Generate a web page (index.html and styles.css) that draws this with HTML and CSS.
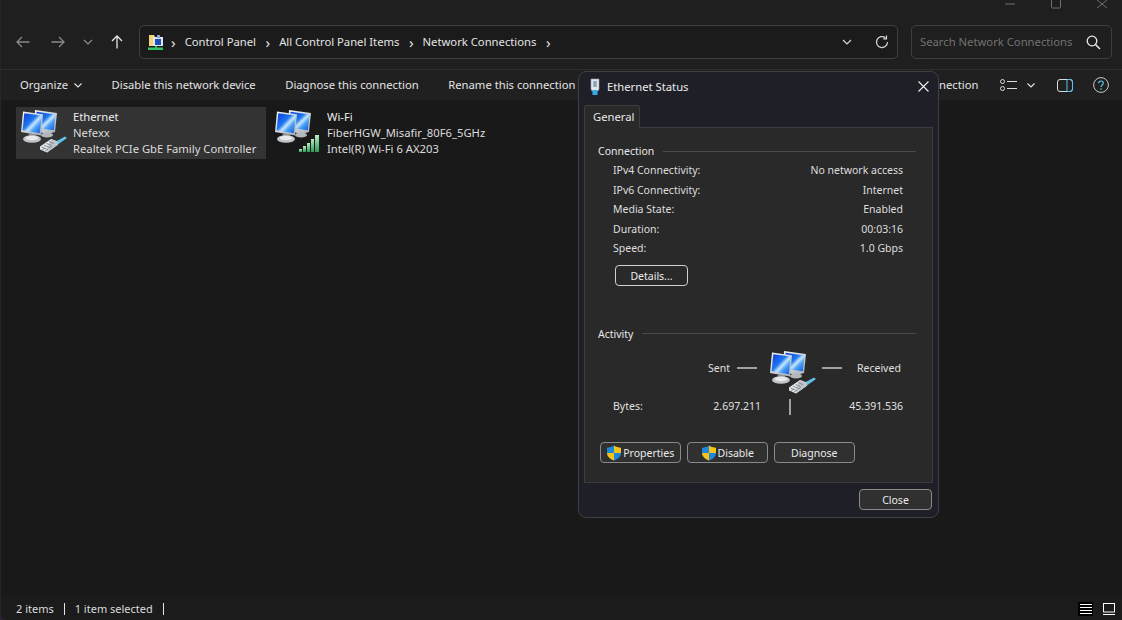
FILE: index.html
```html
<!DOCTYPE html>
<html lang="en">
<head>
<meta charset="utf-8">
<title>Network Connections</title>
<link rel="stylesheet" href="styles.css">
</head>
<body>
<svg class="defs" width="0" height="0" aria-hidden="true">
  <defs>
    <linearGradient id="scr" x1="0" y1="0" x2="1" y2="1">
      <stop offset="0" stop-color="#0a3ad8"/>
      <stop offset=".42" stop-color="#1f78f0"/>
      <stop offset=".56" stop-color="#c8e6ff"/>
      <stop offset=".7" stop-color="#4aa0f5"/>
      <stop offset="1" stop-color="#0f55dc"/>
    </linearGradient>
    <linearGradient id="bez" x1="0" y1="0" x2="1" y2="1">
      <stop offset="0" stop-color="#f6f8fa"/>
      <stop offset="1" stop-color="#a4adb5"/>
    </linearGradient>
    <linearGradient id="bar" x1="0" y1="0" x2="0" y2="1">
      <stop offset="0" stop-color="#b5ecc0"/>
      <stop offset="1" stop-color="#2f9a58"/>
    </linearGradient>
    <symbol id="pc" viewBox="0 0 48 48">
      <path d="M15 3l22 3-2 19-7 2-14-3z" fill="url(#bez)"/>
      <path d="M16.500 4.800l19 2.600-1.700 15.800-17.300-2.500z" fill="url(#scr)"/>
      <ellipse cx="27" cy="28" rx="6" ry="2.500" fill="#b4b8bc"/>
      <path d="M3 4.500l20 2.700L21 28.500 1 25z" fill="url(#bez)"/>
      <path d="M4.300 6.300l17.300 2.300-1.800 17.600-17.200-3z" fill="url(#scr)"/>
      <path d="M9 26l7 1.200 .5 3-8 0z" fill="#8f959b"/>
      <ellipse cx="12" cy="32" rx="9" ry="3.800" fill="#c0c4c8"/>
      <ellipse cx="12" cy="31" rx="6.500" ry="2.200" fill="#e8eaec"/>
    </symbol>
    <symbol id="plug" viewBox="0 0 48 48">
      <path d="M34 35.500l11-6 2 1.500-10.500 7.500z" fill="#5fc0ea"/>
      <path d="M20 39.500l11-7.500 6.500 2.500v3.500l-10.500 7.500-7-3z" fill="#e4e7ea"/>
      <path d="M31 32l6.500 2.500v3.500L27 45.500V42z" fill="#bfc5ca"/>
      <path d="M21.500 40l5 2M24 38.200l5 2M26.500 36.400l5 2M29 34.600l5 2M22 43l3-2M25 44l3-2M29 41l3-2" stroke="#70777c" stroke-width=".8" fill="none"/>
    </symbol>
    <symbol id="shield" viewBox="0 0 16 16">
      <path d="M8 .5C6 2 3.500 2.600 1 2.700V8h7z" fill="#1e88d8"/>
      <path d="M8 .5c2 1.500 4.500 2.100 7 2.200V8H8z" fill="#f6c21c"/>
      <path d="M1 8h7v7.500C4 14 1 11.500 1 8z" fill="#f6c21c"/>
      <path d="M8 8h7c0 3.500-3 6-7 7.500z" fill="#1e88d8"/>
    </symbol>
  </defs>
</svg>

<main class="window">
  <div class="titlebar">
    <svg class="cap" width="10" height="10" viewBox="0 0 10 10"><path d="M0 4h10" stroke="#6f6f6f"/></svg>
    <svg class="cap" width="10" height="10" viewBox="0 0 10 10"><rect x=".5" y="-2" width="9" height="10" rx="1" fill="none" stroke="#6f6f6f"/></svg>
    <svg class="cap" width="10" height="10" viewBox="0 0 10 10"><path d="M0 0l10 8M10 0L0 8" stroke="#6f6f6f" fill="none"/></svg>
  </div>

  <div class="navrow">
    <div class="navbtns">
      <svg class="nav-back" width="14" height="14" viewBox="0 0 14 14"><path d="M13.500 7H1M6 2L1 7l5 5" fill="none" stroke="#8a8a8a" stroke-width="1.300"/></svg>
      <svg class="nav-fwd" width="14" height="14" viewBox="0 0 14 14"><path d="M.5 7H13M8 2l5 5-5 5" fill="none" stroke="#8a8a8a" stroke-width="1.300"/></svg>
      <svg class="nav-drop" width="10" height="6" viewBox="0 0 10 6"><path d="M1 1l4 4 4-4" fill="none" stroke="#8a8a8a" stroke-width="1.200"/></svg>
      <svg class="nav-up" width="14" height="14" viewBox="0 0 14 14"><path d="M7 13.500V1M2 6l5-5 5 5" fill="none" stroke="#e6e6e6" stroke-width="1.300"/></svg>
    </div>
    <div class="address">
      <svg class="crumb-icon" width="16" height="17" viewBox="0 0 16 17">
        <path d="M1 1h5l1 2h2v9H1z" fill="#f2d675"/>
        <rect x="5" y="3" width="10" height="9" fill="#dfe6ee"/>
        <rect x="7" y="5" width="6" height="6" fill="#1d4fb4"/>
        <rect x="9" y="1" width="3" height="3" fill="#8aa8d8"/>
        <path d="M8 12v2" stroke="#2fae5a" stroke-width="2"/>
        <rect x="0" y="13.500" width="15" height="2.500" fill="#35c36a"/>
      </svg>
      <span class="sep">›</span><span class="crumb">Control Panel</span>
      <span class="sep">›</span><span class="crumb">All Control Panel Items</span>
      <span class="sep">›</span><span class="crumb">Network Connections</span>
      <span class="sep">›</span>
      <svg class="addr-drop" width="10" height="6" viewBox="0 0 10 6"><path d="M1 1l4 4 4-4" fill="none" stroke="#d6d6d6" stroke-width="1.200"/></svg>
      <svg class="addr-refresh" width="14" height="14" viewBox="0 0 14 14"><path d="M12.500 7A5.500 5.500 0 1 1 10.500 2.800" fill="none" stroke="#d6d6d6" stroke-width="1.200"/><path d="M11.500 .5v3.300H8.200" fill="none" stroke="#d6d6d6" stroke-width="1.200"/></svg>
    </div>
    <div class="search">
      <span class="search-text">Search Network Connections</span>
      <svg width="15" height="15" viewBox="0 0 15 15"><circle cx="6" cy="6" r="4.800" fill="none" stroke="#eaeaea" stroke-width="1.300"/><path d="M9.500 9.500L14 14" stroke="#eaeaea" stroke-width="1.500"/></svg>
    </div>
  </div>

  <div class="cmdbar">
    <span class="cmd organize">Organize
      <svg width="8" height="5" viewBox="0 0 8 5"><path d="M.5 .5L4 4 7.500 .5" fill="none" stroke="#e6e6e6" stroke-width="1.100"/></svg>
    </span>
    <span class="cmd">Disable this network device</span>
    <span class="cmd">Diagnose this connection</span>
    <span class="cmd">Rename this connection</span>
    <span class="cmd">View status of this connection</span>
    <span class="cmd cmd-last">Change settings of this connection</span>
    <div class="cmd-tools">
      <svg class="tool-view" width="17" height="12" viewBox="0 0 17 12"><circle cx="2.500" cy="2.500" r="2" fill="none" stroke="#dcdcdc"/><circle cx="2.500" cy="9.500" r="2" fill="none" stroke="#dcdcdc"/><path d="M7 2.500h10M7 9.500h10" stroke="#dcdcdc"/></svg>
      <svg class="tool-chev" width="8" height="5" viewBox="0 0 8 5"><path d="M.5 .5L4 4 7.500 .5" fill="none" stroke="#e6e6e6" stroke-width="1.100"/></svg>
      <svg class="tool-pane" width="16" height="13" viewBox="0 0 16 13"><rect x=".5" y=".5" width="15" height="12" rx="2.500" fill="none" stroke="#dcdcdc"/><path d="M10 .5h3a2.500 2.500 0 0 1 2.500 2.500v7A2.500 2.500 0 0 1 13 12.500h-3z" fill="none" stroke="#5cc2f0"/></svg>
      <svg class="tool-help" width="16" height="16" viewBox="0 0 16 16"><circle cx="8" cy="8" r="7.400" fill="none" stroke="#c8c8c8"/><path d="M5.700 6.200C5.700 3.300 10.300 3.300 10.300 6c0 2-2.300 2-2.300 4" fill="none" stroke="#5cc2f0" stroke-width="1.200"/><circle cx="8" cy="12" r=".8" fill="#5cc2f0"/></svg>
    </div>
  </div>

  <div class="content">
    <div class="item selected">
      <svg class="item-icon" width="48" height="48"><use href="#pc"/><use href="#plug"/></svg>
      <div class="item-text">
        <div>Ethernet</div>
        <div>Nefexx</div>
        <div>Realtek PCIe GbE Family Controller</div>
      </div>
    </div>
    <div class="item">
      <svg class="item-icon" width="48" height="48" viewBox="0 0 48 48">
        <use href="#pc" width="48" height="48"/>
        <rect x="25" y="42" width="3" height="3" fill="url(#bar)"/>
        <rect x="29" y="39" width="3" height="6" fill="url(#bar)"/>
        <rect x="33" y="36" width="3" height="9" fill="url(#bar)"/>
        <rect x="37" y="32" width="3" height="13" fill="url(#bar)"/>
        <rect x="41" y="28" width="4" height="17" fill="url(#bar)"/>
      </svg>
      <div class="item-text">
        <div>Wi-Fi</div>
        <div>FiberHGW_Misafir_80F6_5GHz</div>
        <div>Intel(R) Wi-Fi 6 AX203</div>
      </div>
    </div>
  </div>

  <div class="statusbar">
    <span>2 items</span><i class="divider"></i><span>1 item selected</span><i class="divider"></i>
    <div class="status-tools">
      <span class="view-btn active"><svg width="12" height="10" viewBox="0 0 12 10"><path d="M0 .5h12M0 3.500h12M0 6.500h12M0 9.500h12" stroke="#fff"/></svg></span>
      <span class="view-btn"><svg width="12" height="12" viewBox="0 0 12 12"><rect x=".5" y=".5" width="11" height="8.500" fill="none" stroke="#fff"/><path d="M0 11.500h12" stroke="#fff"/></svg></span>
    </div>
  </div>
</main>

<section class="dialog">
  <header class="dlg-title">
    <svg width="12" height="17" viewBox="0 0 12 17">
      <path d="M2 1h8v10l-1 2H3L2 11z" fill="#dfe7ee" stroke="#93a3b0" stroke-width=".6"/>
      <rect x="4.200" y="3" width="3.600" height="6" fill="#8ea2b2"/>
      <rect x="3.500" y="12" width="5" height="5" fill="#36a9e8"/>
    </svg>
    <span class="dlg-name">Ethernet Status</span>
    <svg class="dlg-x" width="11" height="11" viewBox="0 0 11 11"><path d="M.5 .5l10 10M10.500 .5l-10 10" stroke="#f0f0f0" stroke-width="1.100"/></svg>
  </header>
  <div class="tabs"><span class="tab">General</span></div>
  <div class="panel">
    <div class="group-head"><span>Connection</span><i></i></div>
    <div class="rows">
      <div class="row"><span>IPv4 Connectivity:</span><span>No network access</span></div>
      <div class="row"><span>IPv6 Connectivity:</span><span>Internet</span></div>
      <div class="row"><span>Media State:</span><span>Enabled</span></div>
      <div class="row"><span>Duration:</span><span>00:03:16</span></div>
      <div class="row"><span>Speed:</span><span>1.0 Gbps</span></div>
    </div>
    <button class="btn details">Details...</button>

    <div class="group-head activity-head"><span>Activity</span><i></i></div>
    <div class="activity">
      <span class="sent">Sent</span><i class="dash"></i>
      <svg class="act-icon" width="50" height="48" viewBox="0 0 48 48"><use href="#pc" width="48" height="48"/><use href="#plug" width="48" height="48"/></svg>
      <i class="dash"></i><span class="received">Received</span>
    </div>
    <div class="bytes">
      <span class="bytes-label">Bytes:</span>
      <span class="bytes-sent">2.697.211</span>
      <i class="vbar"></i>
      <span class="bytes-recv">45.391.536</span>
    </div>
    <div class="actions">
      <button class="btn act"><svg width="16" height="16"><use href="#shield"/></svg>Properties</button>
      <button class="btn act"><svg width="16" height="16"><use href="#shield"/></svg>Disable</button>
      <button class="btn act">Diagnose</button>
    </div>
  </div>
  <footer class="dlg-foot"><button class="btn close">Close</button></footer>
</section>
</body>
</html>
```

FILE: styles.css
```css
* { box-sizing: border-box; }
html, body { margin: 0; height: 100%; }
body {
  position: relative;
  overflow: hidden;
  background: #2a2233;
  font: 11.250px/16px "Noto Sans", "Liberation Sans", sans-serif;
  color: #e8e8e8;
}
.defs { position: absolute; }
svg { display: block; flex: none; }
i { display: block; }

.window {
  display: flex;
  flex-direction: column;
  height: 620px;
  margin-left: 1px;
  background: #1f1f1f;
  border-bottom-left-radius: 6px;
  overflow: hidden;
}

.titlebar { height: 25px; display: flex; justify-content: flex-end; gap: 36px; padding-right: 15px; }

.navrow { height: 34px; display: flex; align-items: stretch; }
.navbtns { width: 138px; display: flex; align-items: center; padding-left: 15px; }
.nav-fwd { margin-left: 21px; }
.nav-drop { margin-left: 18px; }
.nav-up { margin-left: 17px; }

.address {
  width: 759px;
  display: flex;
  align-items: center;
  padding-left: 8px;
  background: #1b1b1b;
  border: 1px solid #3f3f3f;
  border-radius: 5px;
}
.crumb-icon { margin-right: 7px; }
.sep { font-size: 15px; margin: 0 9px 0 0; color: #e0e0e0; }
.sep:nth-of-type(n) { font-weight: 400; }
.crumb { margin-right: 9.500px; color: #e4e4e4; }
.addr-drop { margin-left: auto; }
.addr-refresh { margin: 0 8px 0 23px; }

.search {
  width: 201px;
  margin-left: 13px;
  display: flex;
  align-items: center;
  justify-content: space-between;
  padding: 0 10px 0 8px;
  border: 1px solid #3f3f3f;
  border-radius: 5px;
}
.search-text { color: #727272; }

.cmdbar {
  margin-top: 10px;
  height: 31px;
  display: flex;
  align-items: center;
  gap: 29.500px;
  padding-left: 19px;
  border-top: 1px solid #2e2e2e;
  background: #202020;
}
.cmd { white-space: nowrap; color: #e4e4e4; }
.organize { display: flex; align-items: center; gap: 6px; }
.cmd-last { margin-left: 4px; }
.cmd-tools { margin-left: -7.500px; display: flex; align-items: center; }
.tool-chev { margin-left: 10px; }
.tool-pane { margin-left: 22px; }
.tool-help { margin-left: 20px; }

.content {
  flex: 1;
  display: flex;
  gap: 4px;
  align-items: flex-start;
  padding: 7px 0 0 15px;
  background: #191919;
}
.item { width: 250px; height: 52px; display: flex; padding-left: 4px; }
.item.selected { background: #333333; }
.item-text { margin: 2px 0 0 5px; white-space: nowrap; color: #dcdcdc; }
.item-text div:first-child { color: #eeeeee; }

.statusbar {
  height: 23px;
  display: flex;
  align-items: center;
  gap: 10px;
  padding-left: 15px;
  background: #1b1b1b;
  color: #dcdcdc;
  font-size: 11px;
}
.divider { width: 1px; height: 12px; background: #e4e4e4; }
.status-tools { margin-left: auto; display: flex; align-items: center; gap: 8px; padding-right: 6px; }
.view-btn { width: 15px; height: 14px; display: flex; align-items: center; justify-content: center; }
.view-btn.active { background: #000; }

.dialog {
  position: absolute;
  left: 578px;
  top: 71px;
  width: 361px;
  height: 447px;
  display: flex;
  flex-direction: column;
  padding: 0 5px;
  background: #1f1f27;
  border: 1px solid #3f3f46;
  border-radius: 8px;
}
.dlg-title { height: 33px; display: flex; align-items: center; gap: 6px; padding: 0 0 4px 5px; }
.dlg-name { color: #ececec; }
.dlg-x { margin-left: auto; margin-right: 4px; }

.tabs { height: 22px; display: flex; }
.tab {
  width: 56px;
  padding: 3px 0 0 8px;
  background: #292929;
  border: 1px solid #3c3c3c;
  border-bottom: 0;
  border-radius: 3px 3px 0 0;
  color: #e8e8e8;
  position: relative;
  z-index: 1;
  height: 23px;
}

.panel {
  height: 356px;
  padding: 15px 16px 0 13px;
  background: #292929;
  border: 1px solid #3c3c3c;
  font-size: 10.500px;
}
.group-head { display: flex; align-items: center; gap: 9px; height: 16px; }
.group-head i { flex: 1; height: 1px; background: #4a4a4a; }
.rows { margin: 1.500px 13px 0 15px; }
.row { height: 19.500px; display: flex; align-items: center; justify-content: space-between; color: #dedede; }

.btn {
  display: flex;
  align-items: center;
  justify-content: center;
  height: 21px;
  padding: 1px 0 0;
  font: inherit;
  color: #ececec;
  background: #2f2f2f;
  border: 1px solid #8a8a8a;
  border-radius: 4px;
}
.details { width: 73px; margin: 6.500px 0 0 17px; background: #292929; border-color: #d0d0d0; }
.activity-head { margin-top: 40px; }

.activity { height: 45px; margin-top: 8px; display: flex; align-items: center; padding-left: 110px; color: #e0e0e0; }
.activity span, .dash { margin-bottom: 8px; }
.sent { width: 29px; }
.dash { width: 20px; height: 2px; background: #a0a0a0; }
.act-icon { margin: 0 4px 0 11px; }
.received { margin-left: 15px; }

.bytes { display: flex; align-items: center; height: 16px; margin: 3px 13px 0 15px; color: #e0e0e0; }
.bytes-label { width: 98px; }
.bytes-sent { width: 50px; text-align: right; }
.vbar { width: 2px; height: 16px; margin: 1px 0 -1px 28px; background: #a0a0a0; }
.bytes-recv { flex: 1; text-align: right; }

.actions { display: flex; gap: 6.500px; margin: 28px 0 0 2px; }
.act { width: 80.500px; gap: 1px; background: #303030; }

.dlg-foot { flex: 1; display: flex; justify-content: flex-end; padding: 6px 1px 0 0; font-size: 10.500px; }
.close { width: 73px; background: #303030; }
```
